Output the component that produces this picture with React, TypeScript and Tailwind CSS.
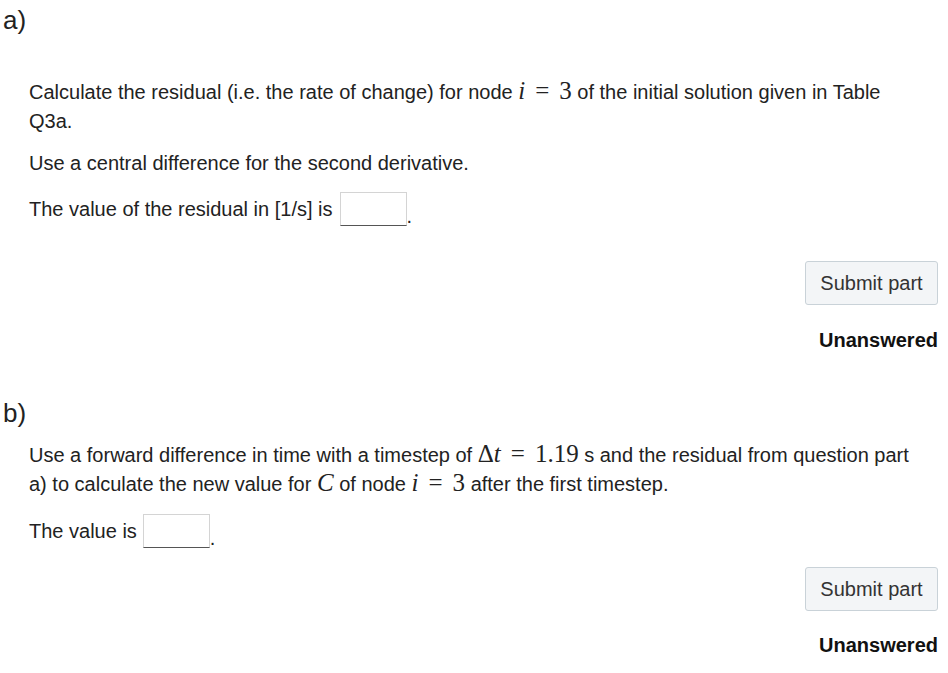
import React from "react";

const M = ({ children }: { children: React.ReactNode }) => (
  <span className="font-['Liberation_Serif','DejaVu_Serif',serif] text-[25px] leading-none">{children}</span>
);
const V = ({ children }: { children: React.ReactNode }) => <i>{children}</i>;
const Eq = () => <span className="mx-[10px]">=</span>;

const Input = () => (
  <span className="inline-block w-[67px] h-[34px] border border-[#d4d4d4] border-b-[#555] bg-white" />
);

const Button = () => (
  <div className="flex justify-end">
    <button className="h-[44px] w-[133px] rounded-[3px] border border-[#c9d2d8] bg-[#f3f5f7] text-[20px] text-[#333]">
      Submit part
    </button>
  </div>
);

export default function App() {
  return (
    <div className="w-[948px] h-[673px] bg-white text-[#222] font-['Liberation_Sans',Arial,sans-serif] text-[20px] pr-[10px] overflow-hidden">
      <div className="pt-[6px] pl-[3px] text-[26px] leading-[28px]">a)</div>
      <div className="pl-[29px]">
        <p className="mt-[44px] leading-[29px] pr-[16px]">
          Calculate the residual (i.e. the rate of change) for node{" "}
          <M>
            <V>i</V>
            <Eq />3
          </M>{" "}
          of the initial solution given in Table Q3a.
        </p>
        <p className="mt-[13px] leading-[29px]">Use a central difference for the second derivative.</p>
        <div className="mt-[14px] flex items-center h-[34px]">
          <span>The value of the residual in [1/s] is</span>
          <span className="ml-[7px] flex items-end h-[34px]">
            <Input />
            <span className="leading-[20px]">.</span>
          </span>
        </div>
        <div className="mt-[35px]">
          <Button />
        </div>
        <div className="mt-[23px] text-right font-bold leading-[24px] text-[#111]">Unanswered</div>
      </div>

      <div className="mt-[47px] pl-[3px] text-[26px] leading-[28px]">b)</div>
      <div className="pl-[29px]">
        <p className="mt-[14px] leading-[29px] pr-[16px]">
          Use a forward difference in time with a timestep of{" "}
          <M>
            Δ<V>t</V>
            <Eq />
            1.19
          </M>{" "}
          s and the residual from question part a) to calculate the new value for{" "}
          <M>
            <V>C</V>
          </M>{" "}
          of node{" "}
          <M>
            <V>i</V>
            <Eq />3
          </M>{" "}
          after the first timestep.
        </p>
        <div className="mt-[15px] flex items-center h-[34px]">
          <span>The value is</span>
          <span className="ml-[6px] flex items-end h-[34px]">
            <Input />
            <span className="leading-[20px]">.</span>
          </span>
        </div>
        <div className="mt-[19px]">
          <Button />
        </div>
        <div className="mt-[22px] text-right font-bold leading-[24px] text-[#111]">Unanswered</div>
      </div>
    </div>
  );
}
